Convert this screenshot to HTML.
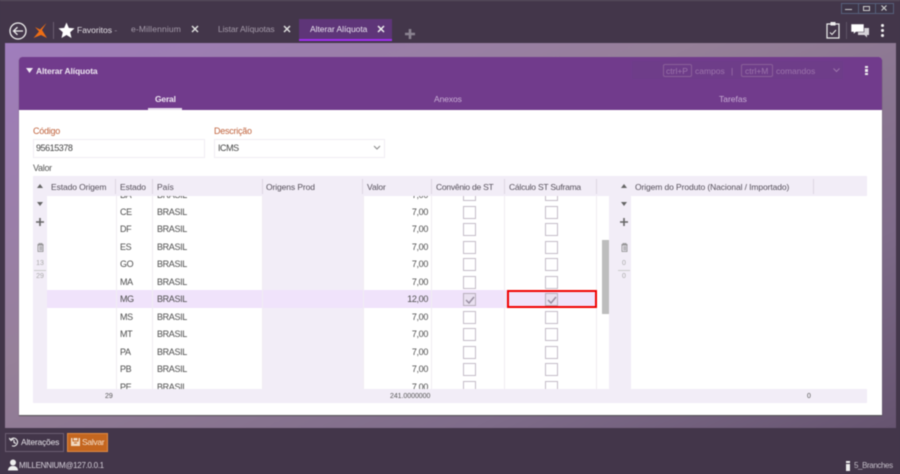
<!DOCTYPE html>
<html lang="pt"><head><meta charset="utf-8"><title>Alterar Alíquota</title>
<style>
html,body{margin:0;padding:0;width:900px;height:474px;overflow:hidden;background:#43364a}
#r{position:relative;width:900px;height:474px;overflow:hidden;background:#43364a;font-family:"Liberation Sans",sans-serif;font-size:8.5px;color:#4a4a4a;filter:blur(.45px)}
#r div,#r span.a,#r svg{position:absolute}
.t{white-space:nowrap;line-height:12px}
.h{top:181px;color:#554f5a;letter-spacing:-.1px}
.c{top:0;color:#4c4c4c;font-size:9px;letter-spacing:-.35px}
.v{width:65px;text-align:right}
.cb{width:11px;height:11px;border:1px solid #c4bcc8;background:#fff}
.ck{background:#e9e0f0;border-color:#b8aebd}
.sep{top:179px;width:1px;height:15px;background:#ddd6e3}
.col{top:196px;width:1px;height:193px;background:#f0edf2}
.k{color:#9c74ab;font-size:8.5px}
.f{color:#444;font-size:9px;letter-spacing:-.45px}
.l{color:#c0623c;font-size:9px;letter-spacing:-.25px}
</style></head><body><div id="r">

<div style="left:0;top:0;width:900px;height:1px;background:#5b5060"></div>

<svg style="left:8px;top:21px" width="20" height="20" viewBox="0 0 20 20"><circle cx="10" cy="10" r="8" fill="none" stroke="#eee" stroke-width="1.3"/><path d="M15 10H6M9.5 6.2L5.5 10l4 3.8" fill="none" stroke="#eee" stroke-width="1.3"/></svg>
<svg style="left:33px;top:23px" width="15" height="16" viewBox="0 0 15 16"><path d="M13.500 0L9 7l5 8-6-3-7.500 3L6 8.500 2 4l5 2.500z" fill="#ee6d14"/></svg>
<div style="left:53px;top:22px;width:1px;height:17px;background:#6a5d70"></div>
<svg style="left:58px;top:22px" width="17" height="17" viewBox="0 0 17 17"><path d="M8.500 .5l2.300 5.400 5.700.5-4.300 3.800 1.300 5.800-5-3-5 3 1.300-5.800L.5 6.400l5.700-.5z" fill="#fff"/></svg>
<div class="t" style="left:77px;top:24px;color:#e6e1e8;font-size:8.5px">Favoritos <span style="color:#9a8fa0">-</span></div>

<div class="t" style="left:131px;top:23px;color:#a49aa9;font-size:8.5px;letter-spacing:.15px">e-Millennium</div>
<svg style="left:191px;top:25px" width="8" height="8" viewBox="0 0 8 8"><path d="M1 1l6 6M7 1L1 7" stroke="#ddd" stroke-width="1.5"/></svg>
<div class="t" style="left:218px;top:23px;color:#a49aa9;font-size:8.5px;letter-spacing:-.1px">Listar Alíquotas</div>
<svg style="left:283px;top:25px" width="8" height="8" viewBox="0 0 8 8"><path d="M1 1l6 6M7 1L1 7" stroke="#ddd" stroke-width="1.5"/></svg>
<div style="left:299px;top:19px;width:93px;height:20px;background:#5e3578"></div>
<div style="left:299px;top:39px;width:93px;height:2px;background:#a02ff0"></div>
<div class="t" style="left:310px;top:23px;color:#e9e3ee;font-size:8.5px;letter-spacing:-.05px">Alterar Alíquota</div>
<svg style="left:377px;top:25px" width="8" height="8" viewBox="0 0 8 8"><path d="M1 1l6 6M7 1L1 7" stroke="#eee" stroke-width="1.5"/></svg>
<svg style="left:404px;top:28px" width="12" height="12" viewBox="0 0 12 12"><path d="M6 1v10M1 6h10" stroke="#8a8290" stroke-width="2.6"/></svg>

<div style="left:841px;top:3px;width:16px;height:9px;border:1px solid #56607a;background:#3e3548"></div>
<div style="left:858px;top:3px;width:16px;height:9px;border:1px solid #56607a;background:#3e3548"></div>
<div style="left:875px;top:3px;width:17px;height:9px;border:1px solid #56607a;background:#3e3548"></div>
<div style="left:845px;top:9px;width:7px;height:1px;background:#ccc"></div>
<div style="left:863px;top:6px;width:5px;height:3px;border:1px solid #ccc"></div>
<svg style="left:881px;top:5px" width="6" height="6" viewBox="0 0 6 6"><path d="M.5.5l5 5M5.500.5l-5 5" stroke="#ccc" stroke-width="1.2"/></svg>

<svg style="left:826px;top:21px" width="14" height="18" viewBox="0 0 14 18"><rect x="1" y="3" width="12" height="14" fill="none" stroke="#eee" stroke-width="1.2"/><rect x="4.500" y="1" width="5" height="3.500" fill="#eee"/><path d="M4 11.500l2 2 4-4.500" fill="none" stroke="#eee" stroke-width="1"/></svg>
<div style="left:846px;top:22px;width:1px;height:17px;background:#5f5366"></div>
<svg style="left:851px;top:24px" width="19" height="14" viewBox="0 0 19 14"><path d="M7 4h11v7h-2v2.500L13.500 11H7z" fill="#d6d2d8"/><path d="M0 0h13v8H5l-2.500 2.500V8H0z" fill="#fff" stroke="#43364a" stroke-width=".6"/></svg>
<div style="left:881px;top:24px;width:3px;height:3px;background:#f2f2f2;border-radius:2px"></div>
<div style="left:881px;top:29px;width:3px;height:3px;background:#f2f2f2;border-radius:2px"></div>
<div style="left:881px;top:34px;width:3px;height:3px;background:#f2f2f2;border-radius:2px"></div>

<div style="left:5px;top:43px;width:891px;height:385px;background:linear-gradient(155deg,#a07dbd 0%,#968099 40%,#7f6c8a 75%,#665470 100%)"></div>

<div style="left:19px;top:57px;width:863px;height:358px;background:#fff;border-radius:3px 3px 0 0;box-shadow:0 1px 1px #555"></div>
<div style="left:19px;top:57px;width:863px;height:53px;background:#713b8c;border-radius:3px 3px 0 0"></div>
<svg style="left:26px;top:68px" width="7" height="5" viewBox="0 0 7 5"><path d="M0 0h7L3.500 5z" fill="#f0eaf3"/></svg>
<div class="t" style="left:36px;top:65px;color:#ece4f0;font-weight:bold;font-size:8.5px;letter-spacing:-.12px">Alterar Alíquota</div>

<div style="left:632px;top:61px;width:211px;height:18px;background:#6e3d89"></div>
<div style="left:663px;top:64px;width:27px;height:11px;border:1px solid #8a5f99;border-radius:2px"></div>
<div class="t k" style="left:666px;top:65px">ctrl+P</div>
<div class="t k" style="left:695px;top:65px">campos</div>
<div class="t k" style="left:731px;top:65px">|</div>
<div style="left:741px;top:64px;width:30px;height:11px;border:1px solid #8a5f99;border-radius:2px"></div>
<div class="t k" style="left:745px;top:65px">ctrl+M</div>
<div class="t k" style="left:776px;top:65px">comandos</div>
<svg style="left:833px;top:68px" width="7" height="5" viewBox="0 0 7 5"><path d="M.5.5l3 3 3-3" fill="none" stroke="#9c74ab"/></svg>
<div style="left:865px;top:66px;width:3px;height:2px;background:#eee"></div>
<div style="left:865px;top:69px;width:3px;height:3px;background:#eee"></div>
<div style="left:865px;top:73px;width:3px;height:2px;background:#eee"></div>

<div class="t" style="left:155px;top:93px;color:#eee6f2;font-weight:bold;font-size:8.5px;letter-spacing:-.2px">Geral</div>
<div style="left:148px;top:108px;width:34px;height:2px;background:#e6dced"></div>
<div class="t" style="left:434px;top:93px;color:#c8aed4;font-size:8.5px;letter-spacing:-.1px">Anexos</div>
<div class="t" style="left:719px;top:93px;color:#c8aed4;font-size:8.5px">Tarefas</div>

<div class="t l" style="left:33px;top:125px">Código</div>
<div style="left:33px;top:139px;width:170px;height:17px;border:1px solid #f0edf3"></div>
<div class="t f" style="left:36px;top:142px">95615378</div>
<div class="t l" style="left:214px;top:125px">Descrição</div>
<div style="left:214px;top:139px;width:169px;height:17px;border:1px solid #f0edf3"></div>
<div class="t f" style="left:218px;top:142px">ICMS</div>
<svg style="left:373px;top:145px" width="8" height="6" viewBox="0 0 8 6"><path d="M1 1l3 3 3-3" fill="none" stroke="#888"/></svg>
<div class="t" style="left:33px;top:162px;color:#555;font-size:9px;letter-spacing:-.3px">Valor</div>

<div style="left:33px;top:176px;width:834px;height:227px;background:#f2edf7"></div>
<div style="left:47px;top:196px;width:215px;height:193px;background:#fff"></div>
<div style="left:363px;top:196px;width:246px;height:193px;background:#fff"></div>
<div style="left:631px;top:196px;width:236px;height:193px;background:#fff"></div>
<div style="left:47px;top:290px;width:550px;height:18px;background:#f0e3fb"></div>
<div class="col" style="left:116px"></div><div class="col" style="left:152px"></div><div class="col" style="left:262px"></div><div class="col" style="left:363px"></div><div class="col" style="left:431px"></div><div class="col" style="left:504px"></div><div class="col" style="left:596px"></div>
<div style="left:602px;top:240px;width:7px;height:74px;background:#bdbdbd"></div>

<div class="t h" style="left:51px">Estado Origem</div><div class="sep" style="left:115px"></div>
<div class="t h" style="left:120px">Estado</div><div class="sep" style="left:152px"></div>
<div class="t h" style="left:157px">País</div><div class="sep" style="left:262px"></div>
<div class="t h" style="left:266px">Origens Prod</div><div class="sep" style="left:362px"></div>
<div class="t h" style="left:367px">Valor</div><div class="sep" style="left:431px"></div>
<div class="t h" style="left:436px;letter-spacing:-.25px">Convênio de ST</div><div class="sep" style="left:504px"></div>
<div class="t h" style="left:509px;letter-spacing:-.22px">Cálculo ST Suframa</div><div class="sep" style="left:596px"></div>
<div class="t h" style="left:635px">Origem do Produto (Nacional / Importado)</div><div class="sep" style="left:813px"></div>

<svg style="left:37px;top:184px" width="6" height="4" viewBox="0 0 6 4"><path d="M3 0l3 4H0z" fill="#666"/></svg>
<svg style="left:37px;top:202px" width="6" height="4" viewBox="0 0 6 4"><path d="M0 0h6L3 4z" fill="#666"/></svg>
<svg style="left:36px;top:218px" width="8" height="8" viewBox="0 0 8 8"><path d="M4 0v8M0 4h8" stroke="#666" stroke-width="1.6"/></svg>
<svg style="left:37px;top:243px" width="7" height="9" viewBox="0 0 7 9"><path d="M.5 1.500h6M2 1V.5h3V1M1 2h5v6.500H1zM3 3v4.500M4.500 3v4.500" fill="none" stroke="#888" stroke-width=".8"/></svg>
<div class="t" style="left:33px;top:258px;width:14px;text-align:center;color:#aaa;font-size:7px">13</div>
<div style="left:34px;top:270px;width:12px;height:1px;background:#ccc"></div>
<div class="t" style="left:33px;top:271px;width:14px;text-align:center;color:#aaa;font-size:7px">29</div>

<svg style="left:621px;top:184px" width="6" height="4" viewBox="0 0 6 4"><path d="M3 0l3 4H0z" fill="#666"/></svg>
<svg style="left:621px;top:202px" width="6" height="4" viewBox="0 0 6 4"><path d="M0 0h6L3 4z" fill="#666"/></svg>
<svg style="left:620px;top:218px" width="8" height="8" viewBox="0 0 8 8"><path d="M4 0v8M0 4h8" stroke="#666" stroke-width="1.6"/></svg>
<svg style="left:621px;top:243px" width="7" height="9" viewBox="0 0 7 9"><path d="M.5 1.500h6M2 1V.5h3V1M1 2h5v6.500H1zM3 3v4.500M4.500 3v4.500" fill="none" stroke="#888" stroke-width=".8"/></svg>
<div class="t" style="left:617px;top:258px;width:14px;text-align:center;color:#aaa;font-size:7px">0</div>
<div style="left:618px;top:270px;width:12px;height:1px;background:#ccc"></div>
<div class="t" style="left:617px;top:271px;width:14px;text-align:center;color:#aaa;font-size:7px">0</div>

<div style="left:47px;top:196px;width:550px;height:193px;overflow:hidden;background:transparent">
 <div class="t c" style="left:73px;top:-7px">BA</div><div class="t c" style="left:110px;top:-7px">BRASIL</div><div class="t c v" style="left:316px;top:-7px">7,00</div><div class="cb" style="left:416px;top:-8px"></div><div class="cb" style="left:498px;top:-8px"></div>
 <div class="t c" style="left:73px;top:10px">CE</div><div class="t c" style="left:110px;top:10px">BRASIL</div><div class="t c v" style="left:316px;top:10px">7,00</div><div class="cb" style="left:416px;top:10px"></div><div class="cb" style="left:498px;top:10px"></div>
 <div class="t c" style="left:73px;top:27px">DF</div><div class="t c" style="left:110px;top:27px">BRASIL</div><div class="t c v" style="left:316px;top:27px">7,00</div><div class="cb" style="left:416px;top:27px"></div><div class="cb" style="left:498px;top:27px"></div>
 <div class="t c" style="left:73px;top:45px">ES</div><div class="t c" style="left:110px;top:45px">BRASIL</div><div class="t c v" style="left:316px;top:45px">7,00</div><div class="cb" style="left:416px;top:45px"></div><div class="cb" style="left:498px;top:45px"></div>
 <div class="t c" style="left:73px;top:62px">GO</div><div class="t c" style="left:110px;top:62px">BRASIL</div><div class="t c v" style="left:316px;top:62px">7,00</div><div class="cb" style="left:416px;top:62px"></div><div class="cb" style="left:498px;top:62px"></div>
 <div class="t c" style="left:73px;top:80px">MA</div><div class="t c" style="left:110px;top:80px">BRASIL</div><div class="t c v" style="left:316px;top:80px">7,00</div><div class="cb" style="left:416px;top:80px"></div><div class="cb" style="left:498px;top:80px"></div>
 <div class="t c" style="left:73px;top:97px">MG</div><div class="t c" style="left:110px;top:97px">BRASIL</div><div class="t c v" style="left:316px;top:97px">12,00</div><div class="cb ck" style="left:416px;top:97px"></div><div class="cb ck" style="left:498px;top:97px"></div>
 <svg style="left:418px;top:100px" width="10" height="8" viewBox="0 0 10 8"><path d="M1 4l3 3 5-6" fill="none" stroke="#9a8fa3" stroke-width="1.5"/></svg>
 <svg style="left:500px;top:100px" width="10" height="8" viewBox="0 0 10 8"><path d="M1 4l3 3 5-6" fill="none" stroke="#9a8fa3" stroke-width="1.5"/></svg>
 <div class="t c" style="left:73px;top:115px">MS</div><div class="t c" style="left:110px;top:115px">BRASIL</div><div class="t c v" style="left:316px;top:115px">7,00</div><div class="cb" style="left:416px;top:115px"></div><div class="cb" style="left:498px;top:115px"></div>
 <div class="t c" style="left:73px;top:132px">MT</div><div class="t c" style="left:110px;top:132px">BRASIL</div><div class="t c v" style="left:316px;top:132px">7,00</div><div class="cb" style="left:416px;top:132px"></div><div class="cb" style="left:498px;top:132px"></div>
 <div class="t c" style="left:73px;top:150px">PA</div><div class="t c" style="left:110px;top:150px">BRASIL</div><div class="t c v" style="left:316px;top:150px">7,00</div><div class="cb" style="left:416px;top:150px"></div><div class="cb" style="left:498px;top:150px"></div>
 <div class="t c" style="left:73px;top:167px">PB</div><div class="t c" style="left:110px;top:167px">BRASIL</div><div class="t c v" style="left:316px;top:167px">7,00</div><div class="cb" style="left:416px;top:167px"></div><div class="cb" style="left:498px;top:167px"></div>
 <div class="t c" style="left:73px;top:185px">PE</div><div class="t c" style="left:110px;top:185px">BRASIL</div><div class="t c v" style="left:316px;top:185px">7,00</div><div class="cb" style="left:416px;top:185px"></div><div class="cb" style="left:498px;top:185px"></div>
</div>

<div style="left:507px;top:290px;width:86px;height:14px;border:2px solid #f00000"></div>

<div class="t" style="left:105px;top:391px;color:#555;font-size:7px">29</div>
<div class="t" style="left:390px;top:391px;color:#555;font-size:7px;letter-spacing:-.05px">241.0000000</div>
<div class="t" style="left:807px;top:391px;color:#555;font-size:7px">0</div>

<div style="left:5px;top:433px;width:57px;height:17px;border:1px solid #6a5d72"></div>
<svg style="left:9px;top:437px" width="10" height="10" viewBox="0 0 10 10"><path d="M1.500 2.500A4 4 0 1 1 3 8.800M0 1l2 2.500L4.500 2M5 3v2.500l2 1" fill="none" stroke="#eee" stroke-width="1.1"/></svg>
<div class="t" style="left:21px;top:436px;color:#e3dfe6;font-size:8.5px;letter-spacing:-.2px">Alterações</div>
<div style="left:67px;top:433px;width:39px;height:17px;border:1px solid #df8a45;background:#c4661f"></div>
<svg style="left:71px;top:437px" width="9" height="9" viewBox="0 0 9 9"><path d="M0 1h9v8H0z" fill="#f0d7bf"/><path d="M2 1v3h5V1M3 6h3" stroke="#c4661f" fill="none"/></svg>
<div class="t" style="left:82px;top:436px;color:#f6e0cc;font-size:8.5px;letter-spacing:-.3px">Salvar</div>

<svg style="left:8px;top:459px" width="10" height="12" viewBox="0 0 10 12"><circle cx="5" cy="3.500" r="3" fill="#eee"/><path d="M0 11.500c0-3 2-4 3.500-4.500h3c1.500.5 3.500 1.500 3.500 4.500z" fill="#eee"/></svg>
<div class="t" style="left:19px;top:460px;color:#d6d0da;font-size:8px;letter-spacing:-.3px">MILLENNIUM@127.0.0.1</div>
<div style="left:846px;top:461px;width:4px;height:2px;background:#eee"></div>
<div style="left:846px;top:464px;width:4px;height:7px;background:#eee"></div>
<div class="t" style="left:854px;top:460px;color:#c2bcc6;font-size:8px;letter-spacing:-.4px">5_Branches</div>
</div></body></html>
